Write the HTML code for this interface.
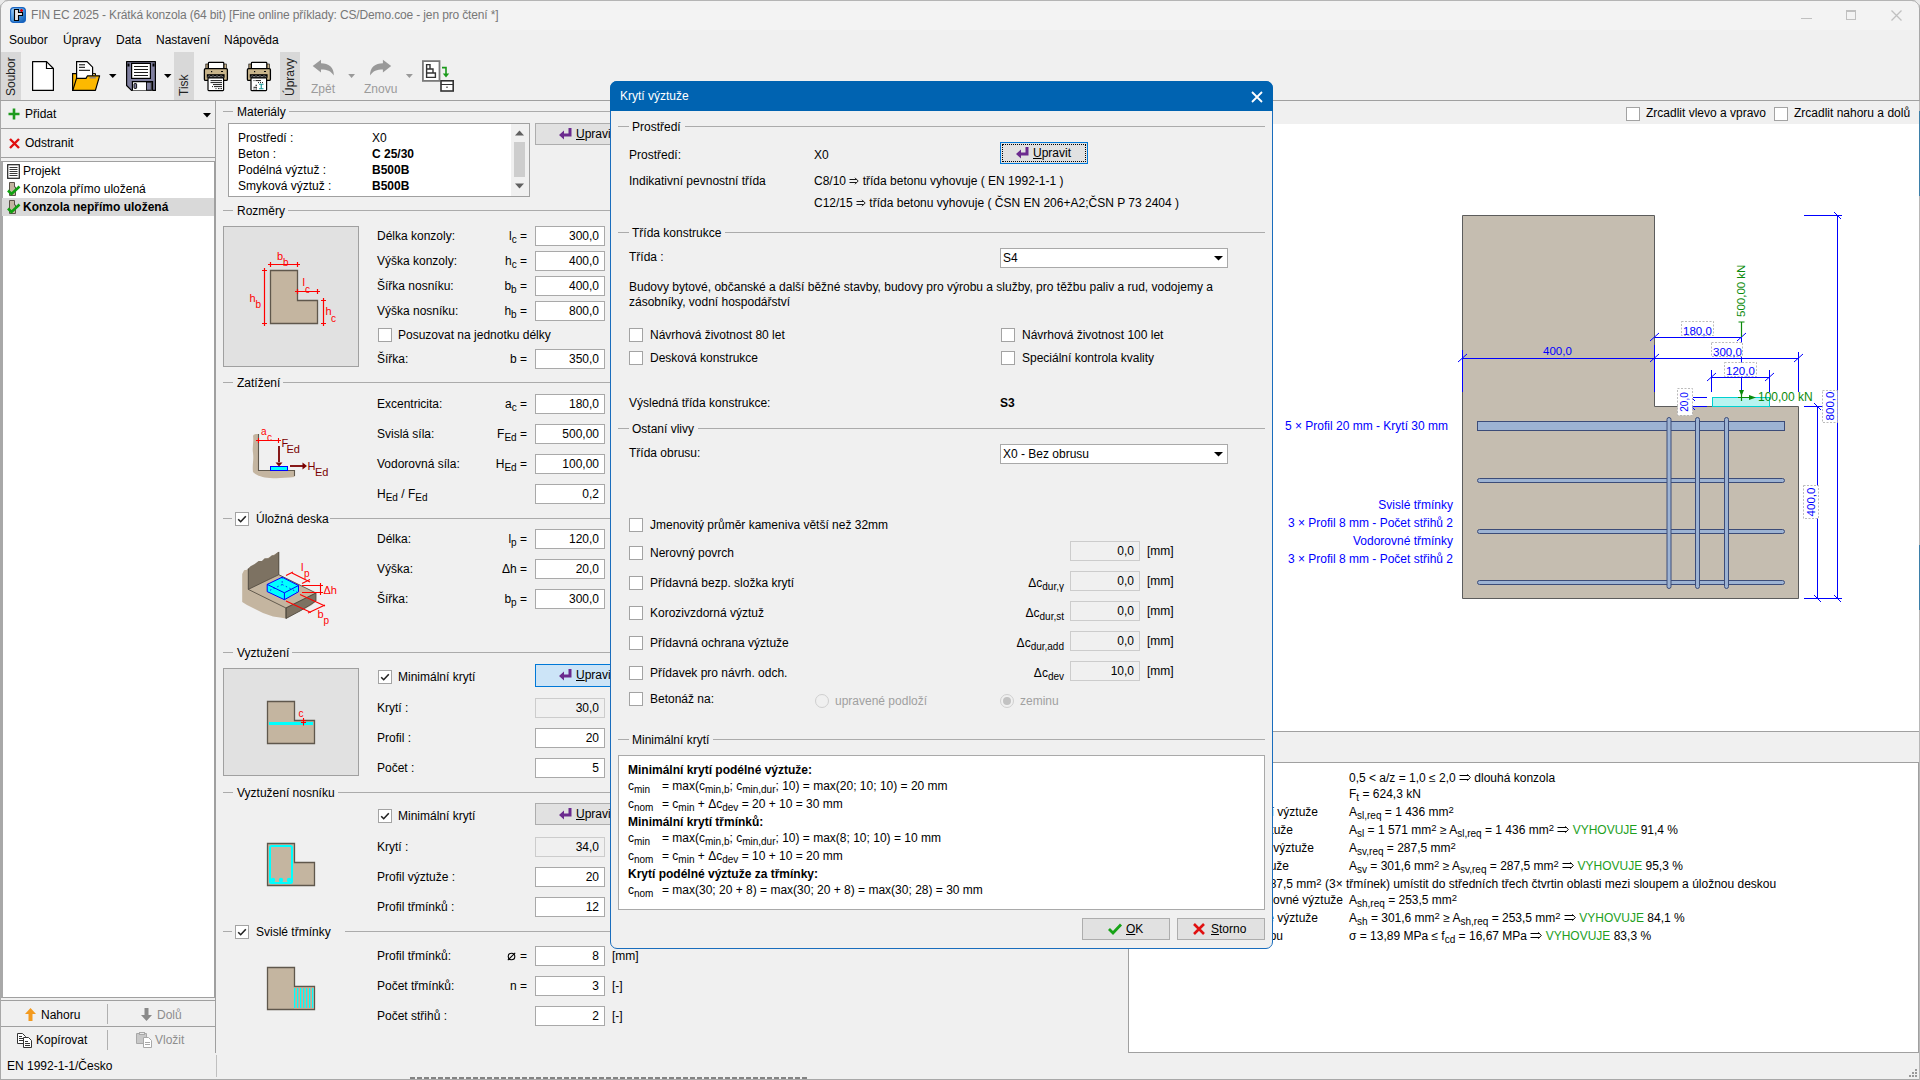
<!DOCTYPE html><html><head><meta charset="utf-8"><style>
*{box-sizing:border-box}
html,body{margin:0;padding:0}
body{width:1920px;height:1080px;overflow:hidden;position:relative;background:#f0f0f0;font-family:"Liberation Sans",sans-serif;font-size:12px;color:#000}
body div{position:absolute}
.t{line-height:16px;white-space:nowrap}
.b{font-weight:bold}
sub{font-size:10px;vertical-align:-2.5px;line-height:0}
sup{font-size:9.5px;vertical-align:3px;line-height:0}
svg{position:absolute;overflow:visible}
</style></head><body>
<div style="left:0px;top:0px;width:1920px;height:30px;background:#f3f3f3"></div>
<div style="left:0px;top:0px;width:1920px;height:1px;background:#b4b4b4"></div>
<div style="left:0px;top:0px;width:1px;height:1080px;background:#a8a8a8"></div>
<div style="left:1919px;top:0px;width:1px;height:1080px;background:#a8a8a8"></div>
<svg style="left:10px;top:7px" width="16" height="16" viewBox="0 0 16 16">
<defs><linearGradient id="ig" x1="0" y1="0" x2="1" y2="1"><stop offset="0" stop-color="#a8d4f8"/><stop offset="0.5" stop-color="#4a9ae0"/><stop offset="1" stop-color="#0a55b0"/></linearGradient></defs>
<rect x="0.6" y="0.6" width="14.8" height="14.8" rx="3.2" fill="url(#ig)" stroke="#1a64c0" stroke-width="1.2"/>
<path d="M4.5 2.5 H8.5 V5.5 H12.5 V8.5 H8.5 V13.5 H4.5 Z" fill="#e8e8e8" stroke="#000" stroke-width="1.1"/>
<path d="M11.5 2 V5 M10 3.5 H13" stroke="#d00" stroke-width="1.3"/></svg>
<svg style="left:0;top:0" width="10" height="10" viewBox="0 0 10 10"><path d="M0 0 H8 A8 8 0 0 0 0 8 Z" fill="#e9e9e9"/><path d="M8.5 0.5 A8 8 0 0 0 0.5 8.5" fill="none" stroke="#b0b0b0" stroke-width="1"/></svg>
<svg style="left:1910px;top:0" width="10" height="10" viewBox="0 0 10 10"><path d="M10 0 H2 A8 8 0 0 1 10 8 Z" fill="#e9e9e9"/><path d="M1.5 0.5 A8 8 0 0 1 9.5 8.5" fill="none" stroke="#b0b0b0" stroke-width="1"/></svg>
<div class="t" style="left:31px;top:6.5px;color:#777;font-size:12px;letter-spacing:-0.14px">FIN EC 2025 - Krátká konzola (64 bit) [Fine online příklady: CS/Demo.coe - jen pro čtení *]</div>
<div style="left:1801px;top:18px;width:11px;height:1px;background:#c0c0c0"></div>
<div style="left:1846px;top:10px;width:10px;height:10px;border:1px solid #c0c0c0;border-top-width:2px"></div>
<svg style="left:1891px;top:10px" width="11" height="11"><path d="M0.5 0.5 L10.5 10.5 M10.5 0.5 L0.5 10.5" stroke="#c0c0c0" stroke-width="1.3"/></svg>
<div class="t" style="left:9px;top:32px;">Soubor</div>
<div class="t" style="left:63px;top:32px;">Úpravy</div>
<div class="t" style="left:116px;top:32px;">Data</div>
<div class="t" style="left:156px;top:32px;">Nastavení</div>
<div class="t" style="left:224px;top:32px;">Nápověda</div>
<div style="left:1px;top:52px;width:20px;height:48px;background:#d8d8d8"></div>
<div class="t" style="left:-13px;top:66px;width:48px;height:20px;line-height:20px;padding-left:4px;transform:rotate(-90deg);color:#222">Soubor</div>
<div style="left:174px;top:52px;width:20px;height:48px;background:#d8d8d8"></div>
<div class="t" style="left:160px;top:66px;width:48px;height:20px;line-height:20px;padding-left:4px;transform:rotate(-90deg);color:#222">Tisk</div>
<div style="left:280px;top:52px;width:20px;height:48px;background:#d8d8d8"></div>
<div class="t" style="left:266px;top:66px;width:48px;height:20px;line-height:20px;padding-left:4px;transform:rotate(-90deg);color:#222">Úpravy</div>
<div style="left:0px;top:100px;width:1920px;height:1px;background:#a0a0a0"></div>
<svg style="left:0;top:0" width="470" height="100" viewBox="0 0 470 100">
<path d="M32.6 61.6 H46.5 L53.4 68.5 V90.4 H32.6 Z" fill="#fff" stroke="#000" stroke-width="1.2" stroke-linejoin="round"/>
<path d="M46.5 61.6 V68.5 H53.4" fill="none" stroke="#000" stroke-width="1.2"/>
<path d="M72.6 90.4 V73.6 H79 V90.4 Z" fill="#fdb900" stroke="#000" stroke-width="1.2"/>
<path d="M76.6 61.6 H87 L92.6 67.2 V79 H76.6 Z" fill="#fff" stroke="#000" stroke-width="1.2"/>
<path d="M79 64.8 H85 M79 67.3 H85 M79 70.3 H90" stroke="#000" stroke-width="1"/>
<path d="M92.6 73.6 H95.5 V75.5" fill="#fdb900" stroke="#000" stroke-width="1"/>
<path d="M72.8 90.4 L76.5 78.4 H86 L87.5 75.8 H99.6 L95.4 90.4 Z" fill="#fdb900" stroke="#000" stroke-width="1.2" stroke-linejoin="round"/>
<path d="M89.5 77.8 H95.8" stroke="#7a7a9a" stroke-width="1.2"/>
<path d="M109 74 H116.5 L112.75 78 Z" fill="#000"/>
<path d="M126.6 61.6 H155.4 V90.4 H131.5 L126.6 85.5 Z" fill="#7f7f9f" stroke="#000" stroke-width="1.2" stroke-linejoin="round"/>
<rect x="131.6" y="63.4" width="18.8" height="15" fill="#fff" stroke="#000" stroke-width="1.2"/>
<path d="M134 66.5 H148 M134 69.5 H148 M134 72.5 H148 M134 75.5 H148" stroke="#000" stroke-width="0.9"/>
<rect x="127.5" y="63.5" width="2" height="3" fill="#000"/><rect x="152.5" y="63.5" width="2" height="3" fill="#000"/>
<path d="M132.4 90.4 V81.6 H152.6 V90.4" fill="#fff" stroke="#000" stroke-width="1.2"/>
<rect x="146.5" y="82.2" width="4.8" height="8" fill="#7f7f9f" stroke="#000" stroke-width="0.9"/>
<rect x="134" y="83.6" width="2.6" height="4.8" rx="0.6" fill="#7f7f9f" stroke="#000" stroke-width="0.9"/>
<path d="M164 74 H171.5 L167.75 78 Z" fill="#000"/>
<g transform="translate(0,0)">
<rect x="205.8" y="64" width="2.6" height="5" fill="#a89370" stroke="#000" stroke-width="0.6"/><rect x="223.8" y="64" width="2.6" height="5" fill="#c8b48a" stroke="#000" stroke-width="0.6"/>
<rect x="208.4" y="62.4" width="15.4" height="6.2" rx="0.8" fill="#fff" stroke="#000" stroke-width="1.2"/>
<rect x="204.4" y="68.6" width="23" height="11.8" rx="1.2" fill="#c8b48a" stroke="#000" stroke-width="1.3"/>
<rect x="206.8" y="74.2" width="17.8" height="3.6" fill="#000"/>
<path d="M207.5 77 C209 75.5 210 75.5 211 77 C212.5 75.5 213.5 75.5 215 77 C216.5 75.5 217.5 75.5 219 77 C220.5 75.5 221.5 75.5 223.5 77" stroke="#999" stroke-width="0.9" fill="none"/>
<rect x="211" y="71" width="1.2" height="1.2" fill="#000"/><rect x="221" y="71" width="2" height="1" fill="#000"/>
<rect x="208" y="77.8" width="15.6" height="12.8" rx="0.8" fill="#fff" stroke="#000" stroke-width="1.2"/>
<path d="M210.5 80.6 H222 M210.5 82.6 H222 M213 84.6 H222 M212 86.6 H213 M214 86.6 H222 M215.5 88.6 H216.5 M218 88.6 H219.5 M220.5 88.6 H222" stroke="#000" stroke-width="0.9"/>
</g><g transform="translate(43,0)">
<rect x="205.8" y="64" width="2.6" height="5" fill="#a89370" stroke="#000" stroke-width="0.6"/><rect x="223.8" y="64" width="2.6" height="5" fill="#c8b48a" stroke="#000" stroke-width="0.6"/>
<rect x="208.4" y="62.4" width="15.4" height="6.2" rx="0.8" fill="#fff" stroke="#000" stroke-width="1.2"/>
<rect x="204.4" y="68.6" width="23" height="11.8" rx="1.2" fill="#c8b48a" stroke="#000" stroke-width="1.3"/>
<rect x="206.8" y="74.2" width="17.8" height="3.6" fill="#000"/>
<path d="M207.5 77 C209 75.5 210 75.5 211 77 C212.5 75.5 213.5 75.5 215 77 C216.5 75.5 217.5 75.5 219 77 C220.5 75.5 221.5 75.5 223.5 77" stroke="#999" stroke-width="0.9" fill="none"/>
<rect x="211" y="71" width="1.2" height="1.2" fill="#000"/><rect x="221" y="71" width="2" height="1" fill="#000"/>
<rect x="208" y="77.8" width="15.6" height="12.8" rx="0.8" fill="#fff" stroke="#000" stroke-width="1.2"/>
<path d="M210.5 80.6 H211.5 M212.5 80.6 H218 M215 82.6 H216 M217 82.6 H218 M219 82.6 H220 M212.5 85.3 H214 M210.5 87.3 H214 M210.5 89 H211.5 M212.5 89 H214" stroke="#000" stroke-width="0.9"/><path d="M216 84.2 H220.5 M218.25 84.2 V88.8 M216 88.8 H220.5" stroke="#1a9a9a" stroke-width="1.1"/>
</g>
<path d="M312.7 66 L321 59.7 V63.3 C328.5 63.3 334.2 67.5 333.8 75.5 C331 71 327 69.5 321 69.5 V72.5 Z" fill="#999"/>
<path d="M348.2 74 H355 L351.6 78 Z" fill="#999"/>
<path d="M391.2 66 L382.9 59.7 V63.3 C375.4 63.3 369.7 67.5 370.1 75.5 C372.9 71 376.9 69.5 382.9 69.5 V72.5 Z" fill="#999"/>
<path d="M405.9 74 H412.9 L409.4 78 Z" fill="#999"/>
<rect x="422.9" y="61.1" width="16.6" height="19.8" fill="#fff" stroke="#7a7a7a" stroke-width="1.8"/>
<path d="M426.6 64.6 H430 V69 H433 V73 H435.4 V77.4 H426.6 Z M426.6 69 H430 M426.6 73 H433" fill="none" stroke="#333" stroke-width="1.4"/>
<path d="M442 67.6 H446 V74" fill="none" stroke="#1a9a1a" stroke-width="1.6"/><path d="M442.8 73.5 H449.2 L446 77.5 Z" fill="#1a9a1a"/>
<rect x="441" y="80.8" width="12.2" height="10.2" fill="#fff" stroke="#333" stroke-width="1.6"/>
<path d="M441 84.5 H453.2 M447 86.5 V88" stroke="#333" stroke-width="1.2"/>
</svg>
<div class="t" style="left:311px;top:81px;color:#9b9b9b">Zpět</div>
<div class="t" style="left:364px;top:81px;color:#9b9b9b">Znovu</div>
<div style="left:215px;top:101px;width:1px;height:952px;background:#a0a0a0"></div>
<div style="left:1px;top:128px;width:214px;height:1px;background:#a0a0a0"></div>
<svg style="left:8px;top:108px" width="12" height="12"><path d="M6 0.5 V11.5 M0.5 6 H11.5" stroke="#1f9a1f" stroke-width="2.6"/></svg>
<div class="t" style="left:25px;top:106px;">Přidat</div>
<svg style="left:203px;top:113px" width="8" height="5"><path d="M0 0 H8 L4 4.5 Z" fill="#000"/></svg>
<div style="left:1px;top:157px;width:214px;height:1px;background:#a0a0a0"></div>
<svg style="left:9px;top:138px" width="11" height="11"><path d="M1 1 L10 10 M10 1 L1 10" stroke="#e01010" stroke-width="2.4"/></svg>
<div class="t" style="left:25px;top:135px;">Odstranit</div>
<div style="left:1px;top:161px;width:214px;height:837px;background:#fff;border:1px solid #a0a0a0;border-left:2px solid #a8a8a8"></div>
<svg style="left:7px;top:164px" width="13" height="15"><rect x="0.7" y="0.7" width="11.6" height="13.6" fill="#fff" stroke="#222" stroke-width="1.2"/><path d="M2.5 3.5 H10.5 M2.5 5.5 H10.5 M2.5 7.5 H10.5 M2.5 9.5 H10.5 M2.5 11.5 H10.5" stroke="#222" stroke-width="0.9"/></svg>
<div class="t" style="left:23px;top:163px;">Projekt</div>
<div style="left:2px;top:198px;width:212px;height:18px;background:#d9d9d9"></div>
<svg style="left:7px;top:182px" width="14" height="15"><path d="M2.5 0.5 H7.5 V5 H8.5 V13.5 H2.5 Z" fill="#c4b5a0" stroke="#5a5248" stroke-width="1"/><path d="M1 8.5 L4.5 12 L12.5 4.5" fill="none" stroke="#10a010" stroke-width="2.6"/></svg>
<svg style="left:7px;top:200px" width="14" height="15"><path d="M2.5 0.5 H7.5 V5 H8.5 V13.5 H2.5 Z" fill="#c4b5a0" stroke="#5a5248" stroke-width="1"/><path d="M1 8.5 L4.5 12 L12.5 4.5" fill="none" stroke="#10a010" stroke-width="2.6"/></svg>
<div class="t" style="left:23px;top:181px;">Konzola přímo uložená</div>
<div class="t" style="left:23px;top:199px;font-weight:bold">Konzola nepřímo uložená</div>
<div style="left:1px;top:1000px;width:214px;height:1px;background:#a0a0a0"></div>
<div style="left:1px;top:1026px;width:214px;height:1px;background:#a0a0a0"></div>
<div style="left:107px;top:1004px;width:1px;height:20px;background:#b0b0b0"></div>
<div style="left:107px;top:1030px;width:1px;height:20px;background:#b0b0b0"></div>
<svg style="left:25px;top:1008px" width="11" height="13"><path d="M5.5 0 L11 6 H7.5 V13 H3.5 V6 H0 Z" fill="#f39a1f"/></svg>
<div class="t" style="left:41px;top:1007px;">Nahoru</div>
<svg style="left:141px;top:1008px" width="11" height="13"><path d="M5.5 13 L11 7 H7.5 V0 H3.5 V7 H0 Z" fill="#8a8a8a"/></svg>
<div class="t" style="left:157px;top:1007px;color:#8d8d8d">Dolů</div>
<svg style="left:17px;top:1033px" width="16" height="15" viewBox="0 0 16 15"><path d="M0.5 0.5 H5.5 L8.5 3.5 V10.5 H0.5 Z" fill="#fff" stroke="#333" stroke-width="1"/><path d="M2 3.5 H5 M2 5.5 H6 M2 7.5 H6" stroke="#333" stroke-width="1"/><path d="M6.5 4.5 H11.5 L14.5 7.5 V14.5 H6.5 Z" fill="#fff" stroke="#333" stroke-width="1"/><path d="M8 8.5 H11 M8 10.5 H13 M8 12.5 H13" stroke="#333" stroke-width="1"/></svg>
<div class="t" style="left:36px;top:1032px;">Kopírovat</div>
<svg style="left:136px;top:1032px" width="17" height="17" viewBox="0 0 17 17"><path d="M0.5 1.5 H10.5 V11.5 H0.5 Z" fill="#c8c8c8" stroke="#a8a8a8" stroke-width="1"/><rect x="3.5" y="0.5" width="5" height="2" fill="#e8e8e8" stroke="#a8a8a8" stroke-width="1"/><path d="M7.5 5.5 H12.5 L15.5 8.5 V15.5 H7.5 Z" fill="#fff" stroke="#a8a8a8" stroke-width="1"/><path d="M9 10.5 H14 M9 12.5 H14" stroke="#a8a8a8" stroke-width="1"/></svg>
<div class="t" style="left:155px;top:1032px;color:#8d8d8d">Vložit</div>
<div style="left:216px;top:1055px;width:1px;height:22px;background:#c0c0c0"></div>
<div class="t" style="left:7px;top:1058px;">EN 1992-1-1/Česko</div>
<div style="left:0px;top:1079px;width:1920px;height:1px;background:#a8a8a8"></div>
<div style="left:223px;top:111px;width:10px;height:1px;background:#ababab"></div>
<div class="t" style="left:237px;top:104px;">Materiály</div>
<div style="left:289px;top:111px;width:839px;height:1px;background:#ababab"></div>
<div style="left:228px;top:123px;width:302px;height:74px;background:#fff;border:1px solid #a0a0a0"></div>
<div class="t" style="left:238px;top:129.5px;">Prostředí :</div>
<div class="t" style="left:372px;top:129.5px;">X0</div>
<div class="t" style="left:238px;top:145.5px;">Beton :</div>
<div class="t" style="left:372px;top:145.5px;font-weight:bold">C 25/30</div>
<div class="t" style="left:238px;top:161.5px;">Podélná výztuž :</div>
<div class="t" style="left:372px;top:161.5px;font-weight:bold">B500B</div>
<div class="t" style="left:238px;top:177.5px;">Smyková výztuž :</div>
<div class="t" style="left:372px;top:177.5px;font-weight:bold">B500B</div>
<div style="left:511px;top:124px;width:18px;height:72px;background:#f0f0f0"></div>
<svg style="left:515px;top:130px" width="10" height="6"><path d="M0 5.5 H9 L4.5 0.5 Z" fill="#606060"/></svg>
<svg style="left:515px;top:183px" width="10" height="6"><path d="M0 0.5 H9 L4.5 5.5 Z" fill="#606060"/></svg>
<div style="left:514px;top:142px;width:11px;height:35px;background:#cdcdcd"></div>
<div style="left:535px;top:123px;width:120px;height:22px;background:#e1e1e1;border:1px solid #adadad"></div>
<svg style="left:559px;top:128px" width="13" height="12" viewBox="0 0 13 12"><path d="M9.5 0 H12.5 V8.5 H5 V11.5 L0 7 L5 2.5 V5.5 H9.5 Z" fill="#6b2a8e"/></svg>
<div class="t" style="left:576px;top:126px;"><u>U</u>pravit</div>
<div style="left:223px;top:210px;width:10px;height:1px;background:#ababab"></div>
<div class="t" style="left:237px;top:203px;">Rozměry</div>
<div style="left:288px;top:210px;width:840px;height:1px;background:#ababab"></div>
<div style="left:223px;top:226px;width:136px;height:141px;background:#e1e1e1;border:1px solid #a0a0a0"></div>
<svg style="left:240px;top:240px" width="110" height="100" viewBox="240 240 110 100">
<path d="M270.5 270.5 H297.5 V300.5 H317.5 V323.5 H270.5 Z" fill="#c4b5a0" stroke="#5f574c" stroke-width="1.3"/>
<g stroke="#ff0000" stroke-width="1.2" fill="none">
<path d="M268 264.5 H300 M270.5 262 V267 M297.5 262 V267"/>
<path d="M264.5 268 V326 M262 270.5 H267 M262 323.5 H267"/>
<path d="M295 291.5 H320 M297.5 289 V294 M317.5 289 V294"/>
<path d="M323.5 298 V326 M321 300.5 H326 M321 323.5 H326"/>
</g>
<g fill="#ff0000" font-family="Liberation Sans" font-size="11">
<text x="277" y="260">b</text><text x="283" y="266" font-size="10">b</text>
<text x="249.5" y="302">h</text><text x="255.5" y="308" font-size="10">b</text>
<text x="302.5" y="286">l</text><text x="305" y="293" font-size="10">c</text>
<text x="325.5" y="315">h</text><text x="331" y="322" font-size="10">c</text>
</g></svg>
<div class="t" style="left:377px;top:228px;">Délka konzoly:</div>
<div class="t" style="right:1393px;top:228px;">l<sub>c</sub> =</div>
<div style="left:535px;top:226px;width:70px;height:20px;background:#fff;border:1px solid #a9a9a9"></div>
<div class="t" style="right:1321px;top:228.0px;">300,0</div>
<div class="t" style="left:377px;top:253px;">Výška konzoly:</div>
<div class="t" style="right:1393px;top:253px;">h<sub>c</sub> =</div>
<div style="left:535px;top:251px;width:70px;height:20px;background:#fff;border:1px solid #a9a9a9"></div>
<div class="t" style="right:1321px;top:253.0px;">400,0</div>
<div class="t" style="left:377px;top:278px;">Šířka nosníku:</div>
<div class="t" style="right:1393px;top:278px;">b<sub>b</sub> =</div>
<div style="left:535px;top:276px;width:70px;height:20px;background:#fff;border:1px solid #a9a9a9"></div>
<div class="t" style="right:1321px;top:278.0px;">400,0</div>
<div class="t" style="left:377px;top:303px;">Výška nosníku:</div>
<div class="t" style="right:1393px;top:303px;">h<sub>b</sub> =</div>
<div style="left:535px;top:301px;width:70px;height:20px;background:#fff;border:1px solid #a9a9a9"></div>
<div class="t" style="right:1321px;top:303.0px;">800,0</div>
<div style="left:378px;top:328px;width:14px;height:14px;background:#fff;border:1px solid #a3a3a3"></div>
<div class="t" style="left:398px;top:327px;">Posuzovat na jednotku délky</div>
<div class="t" style="left:377px;top:351px;">Šířka:</div>
<div class="t" style="right:1393px;top:351px;">b =</div>
<div style="left:535px;top:349px;width:70px;height:20px;background:#fff;border:1px solid #a9a9a9"></div>
<div class="t" style="right:1321px;top:351.0px;">350,0</div>
<div style="left:223px;top:382px;width:10px;height:1px;background:#ababab"></div>
<div class="t" style="left:237px;top:375px;">Zatížení</div>
<div style="left:283px;top:382px;width:845px;height:1px;background:#ababab"></div>
<svg style="left:240px;top:420px" width="100" height="70" viewBox="0 0 100 70">
<path d="M13 16 C14 14 16 14 18.5 14 V50.5 H54.5 V57 C45 58 38 58.5 30 58 C22 57.5 16 55 13 52 C12 45 14 40 13 33 C12 27 14 22 13 16 Z" fill="#c4b5a0"/>
<path d="M18.5 14 V50.5 H54.5 V56" fill="none" stroke="#5f574c" stroke-width="1.1"/>
<g stroke="#ff0000" stroke-width="1.1"><path d="M16 20.5 H41 M18.5 18 V23 M38.5 18 V23"/></g>
<rect x="30.5" y="46.5" width="17" height="4" fill="#00ffff" stroke="#0000ff" stroke-width="1"/>
<path d="M39 26 V42" stroke="#7a0000" stroke-width="1.8"/><path d="M35.5 42.5 H42.5 L39 46.5 Z" fill="#7a0000"/>
<path d="M50 46 H63" stroke="#7a0000" stroke-width="1.8"/><path d="M62.5 42.5 V49.5 L67 46 Z" fill="#7a0000"/>
<g font-family="Liberation Sans"><text x="21" y="15" font-size="10" fill="#ff0000">a</text><text x="27" y="20.5" font-size="10" fill="#ff0000">c</text>
<text x="41.5" y="27" font-size="11" fill="#7a0000">F</text><text x="46.5" y="33" font-size="11" fill="#7a0000">Ed</text>
<text x="67.5" y="50" font-size="11" fill="#7a0000">H</text><text x="75" y="56" font-size="11" fill="#7a0000">Ed</text></g>
</svg>
<div class="t" style="left:377px;top:396px;">Excentricita:</div>
<div class="t" style="right:1393px;top:396px;">a<sub>c</sub> =</div>
<div style="left:535px;top:394px;width:70px;height:20px;background:#fff;border:1px solid #a9a9a9"></div>
<div class="t" style="right:1321px;top:396.0px;">180,0</div>
<div class="t" style="left:377px;top:426px;">Svislá síla:</div>
<div class="t" style="right:1393px;top:426px;">F<sub>Ed</sub> =</div>
<div style="left:535px;top:424px;width:70px;height:20px;background:#fff;border:1px solid #a9a9a9"></div>
<div class="t" style="right:1321px;top:426.0px;">500,00</div>
<div class="t" style="left:377px;top:456px;">Vodorovná síla:</div>
<div class="t" style="right:1393px;top:456px;">H<sub>Ed</sub> =</div>
<div style="left:535px;top:454px;width:70px;height:20px;background:#fff;border:1px solid #a9a9a9"></div>
<div class="t" style="right:1321px;top:456.0px;">100,00</div>
<div class="t" style="left:377px;top:486px;">H<sub>Ed</sub> / F<sub>Ed</sub></div>
<div style="left:535px;top:484px;width:70px;height:20px;background:#fff;border:1px solid #a9a9a9"></div>
<div class="t" style="right:1321px;top:486.0px;">0,2</div>
<div style="left:223px;top:518px;width:9px;height:1px;background:#ababab"></div>
<div style="left:235px;top:512px;width:14px;height:14px;background:#fff;border:1px solid #a3a3a3"></div>
<svg style="left:235px;top:512px" width="14" height="14"><path d="M3.2 7.2 L5.7 9.7 L10.8 4.2" fill="none" stroke="#222" stroke-width="1.6"/></svg>
<div class="t" style="left:256px;top:511px;">Úložná deska</div>
<div style="left:330px;top:518px;width:798px;height:1px;background:#ababab"></div>
<svg style="left:235px;top:545px" width="110" height="85" viewBox="0 0 110 85">
<path d="M7.2 29.1 L9.1 25.2 L11.9 24.7 L13.3 23.6 L43.8 7 V29.5 L81 48 V56 L77 60 L70 64 L63 67 L51 73.5 L45 72.5 L38 71.5 L28 68 L20 64 L12 60 L7.2 56.9 Z" fill="#c4b5a0"/>
<path d="M13.3 44.4 V23.6 L15.5 21.3 L19.7 19.1 L23.6 16.1 L26.9 16.1 L29.7 13.3 L33.6 13.3 L36.9 10.2 L39.1 10.2 L43 6.9 L43.8 6.9 V29.7 Z" fill="#7d7262"/>
<path d="M13.3 44.4 V23.6 M43.8 6.9 V29.7" stroke="#4a443a" stroke-width="0.9"/>
<path d="M13.3 44.4 L43.8 29.7 L81 48 L51 63 Z" fill="#c4b5a0" stroke="#4a443a" stroke-width="0.8"/>
<path d="M51 63 L81 48 V56 L75 60 L65 66 L51 73.5 Z" fill="#7d7262" stroke="#4a443a" stroke-width="0.8"/>
<path d="M51 63 V73.5" stroke="#4a443a" stroke-width="0.8"/>
<path d="M32.2 39.4 L47.2 32.2 L63.5 40.5 L63.5 46.8 L49.4 54.7 L32.2 46.6 Z" fill="#00ffff"/>
<path d="M47.2 32.2 V39.5 M47.2 39.5 L33.5 46 M47.2 39.5 L62 47" stroke="#0000ff" stroke-width="0.8" stroke-dasharray="1.5 2.5" fill="none"/>
<path d="M32.2 39.4 L47.2 32.2 L63.5 40.5 L49.4 47.8 Z M32.2 39.4 V46.6 L49.4 54.7 L63.5 46.8 V40.5 M49.4 47.8 V54.7" fill="none" stroke="#0000ff" stroke-width="1"/>
<g stroke="#ff0000" stroke-width="1.1" fill="none">
<path d="M51 30.5 L58 27 M57 28 L75 37 M67 38.5 L75 34.5"/>
<path d="M67 40.5 H88 M67 47.5 H88 M85.5 38 V50"/>
<path d="M65 49.5 L90 61 M51 56 L76 67.5 M73 68 L90 60"/>
</g>
<g font-family="Liberation Sans" fill="#ff0000"><text x="66" y="26" font-size="11">l</text><text x="69" y="32" font-size="10">p</text>
<text x="88.5" y="49" font-size="11">Δh</text>
<text x="82.5" y="73" font-size="11">b</text><text x="88.5" y="79" font-size="10">p</text></g>
</svg>
<div class="t" style="left:377px;top:531px;">Délka:</div>
<div class="t" style="right:1393px;top:531px;">l<sub>p</sub> =</div>
<div style="left:535px;top:529px;width:70px;height:20px;background:#fff;border:1px solid #a9a9a9"></div>
<div class="t" style="right:1321px;top:531.0px;">120,0</div>
<div class="t" style="left:377px;top:561px;">Výška:</div>
<div class="t" style="right:1393px;top:561px;">Δh =</div>
<div style="left:535px;top:559px;width:70px;height:20px;background:#fff;border:1px solid #a9a9a9"></div>
<div class="t" style="right:1321px;top:561.0px;">20,0</div>
<div class="t" style="left:377px;top:591px;">Šířka:</div>
<div class="t" style="right:1393px;top:591px;">b<sub>p</sub> =</div>
<div style="left:535px;top:589px;width:70px;height:20px;background:#fff;border:1px solid #a9a9a9"></div>
<div class="t" style="right:1321px;top:591.0px;">300,0</div>
<div style="left:223px;top:652px;width:10px;height:1px;background:#ababab"></div>
<div class="t" style="left:237px;top:645px;">Vyztužení</div>
<div style="left:292px;top:652px;width:836px;height:1px;background:#ababab"></div>
<div style="left:223px;top:668px;width:136px;height:108px;background:#e1e1e1;border:1px solid #a0a0a0"></div>
<svg style="left:255px;top:690px" width="75" height="60" viewBox="255 690 75 60">
<path d="M267.5 701.5 H294.5 V720.5 H314.5 V743.5 H267.5 Z" fill="#c4b5a0" stroke="#5f574c" stroke-width="1.3"/>
<rect x="269" y="722" width="44" height="3" fill="#00ffff"/>
<path d="M303.5 718 V725.5 M301 720.5 H306 M301 722.5 H306" stroke="#ff0000" stroke-width="1.1"/>
<text x="298.5" y="717" font-family="Liberation Sans" font-size="10" fill="#ff0000">c</text>
</svg>
<div style="left:378px;top:670px;width:14px;height:14px;background:#fff;border:1px solid #a3a3a3"></div>
<svg style="left:378px;top:670px" width="14" height="14"><path d="M3.2 7.2 L5.7 9.7 L10.8 4.2" fill="none" stroke="#222" stroke-width="1.6"/></svg>
<div class="t" style="left:398px;top:669px;">Minimální krytí</div>
<div style="left:535px;top:664px;width:120px;height:23px;background:#cce4f7;border:1px solid #0078d7"></div>
<svg style="left:559px;top:669px" width="13" height="12" viewBox="0 0 13 12"><path d="M9.5 0 H12.5 V8.5 H5 V11.5 L0 7 L5 2.5 V5.5 H9.5 Z" fill="#6b2a8e"/></svg>
<div class="t" style="left:576px;top:667px;"><u>U</u>pravit</div>
<div class="t" style="left:377px;top:700px;">Krytí :</div>
<div style="left:535px;top:698px;width:70px;height:20px;background:#f0f0f0;border:1px solid #cccccc"></div>
<div class="t" style="right:1321px;top:700.0px;">30,0</div>
<div class="t" style="left:377px;top:730px;">Profil :</div>
<div style="left:535px;top:728px;width:70px;height:20px;background:#fff;border:1px solid #a9a9a9"></div>
<div class="t" style="right:1321px;top:730.0px;">20</div>
<div class="t" style="left:377px;top:760px;">Počet :</div>
<div style="left:535px;top:758px;width:70px;height:20px;background:#fff;border:1px solid #a9a9a9"></div>
<div class="t" style="right:1321px;top:760.0px;">5</div>
<div style="left:223px;top:792px;width:10px;height:1px;background:#ababab"></div>
<div class="t" style="left:237px;top:785px;">Vyztužení nosníku</div>
<div style="left:338px;top:792px;width:790px;height:1px;background:#ababab"></div>
<svg style="left:255px;top:835px" width="75" height="60" viewBox="255 835 75 60">
<path d="M267.5 843.5 H294.5 V862.5 H314.5 V885.5 H267.5 Z" fill="#c4b5a0" stroke="#5f574c" stroke-width="1.3"/>
<rect x="270" y="846" width="22" height="37" rx="1.5" fill="none" stroke="#00ffff" stroke-width="2"/>
<circle cx="273" cy="880" r="2.2" fill="#00ffff"/><circle cx="281" cy="880" r="2.2" fill="#00ffff"/><circle cx="289" cy="880" r="2.2" fill="#00ffff"/>
</svg>
<div style="left:378px;top:809px;width:14px;height:14px;background:#fff;border:1px solid #a3a3a3"></div>
<svg style="left:378px;top:809px" width="14" height="14"><path d="M3.2 7.2 L5.7 9.7 L10.8 4.2" fill="none" stroke="#222" stroke-width="1.6"/></svg>
<div class="t" style="left:398px;top:808px;">Minimální krytí</div>
<div style="left:535px;top:803px;width:120px;height:22px;background:#e1e1e1;border:1px solid #adadad"></div>
<svg style="left:559px;top:808px" width="13" height="12" viewBox="0 0 13 12"><path d="M9.5 0 H12.5 V8.5 H5 V11.5 L0 7 L5 2.5 V5.5 H9.5 Z" fill="#6b2a8e"/></svg>
<div class="t" style="left:576px;top:806px;"><u>U</u>pravit</div>
<div class="t" style="left:377px;top:839px;">Krytí :</div>
<div style="left:535px;top:837px;width:70px;height:20px;background:#f0f0f0;border:1px solid #cccccc"></div>
<div class="t" style="right:1321px;top:839.0px;">34,0</div>
<div class="t" style="left:377px;top:869px;">Profil výztuže :</div>
<div style="left:535px;top:867px;width:70px;height:20px;background:#fff;border:1px solid #a9a9a9"></div>
<div class="t" style="right:1321px;top:869.0px;">20</div>
<div class="t" style="left:377px;top:899px;">Profil třmínků :</div>
<div style="left:535px;top:897px;width:70px;height:20px;background:#fff;border:1px solid #a9a9a9"></div>
<div class="t" style="right:1321px;top:899.0px;">12</div>
<div style="left:223px;top:931px;width:9px;height:1px;background:#ababab"></div>
<div style="left:235px;top:925px;width:14px;height:14px;background:#fff;border:1px solid #a3a3a3"></div>
<svg style="left:235px;top:925px" width="14" height="14"><path d="M3.2 7.2 L5.7 9.7 L10.8 4.2" fill="none" stroke="#222" stroke-width="1.6"/></svg>
<div class="t" style="left:256px;top:924px;">Svislé třmínky</div>
<div style="left:345px;top:931px;width:783px;height:1px;background:#ababab"></div>
<svg style="left:255px;top:960px" width="75" height="60" viewBox="255 960 75 60">
<path d="M267.5 967.5 H294.5 V986.5 H314.5 V1009.5 H267.5 Z" fill="#c4b5a0" stroke="#5f574c" stroke-width="1.3"/>
<rect x="294" y="987.5" width="20" height="21" fill="#d0a890"/><rect x="294" y="988" width="1.3" height="20" fill="#00ffff"/><rect x="297" y="988" width="1.3" height="20" fill="#00ffff"/><rect x="300" y="988" width="1.3" height="20" fill="#00ffff"/><rect x="303" y="988" width="1.3" height="20" fill="#00ffff"/><rect x="306" y="988" width="1.3" height="20" fill="#00ffff"/><rect x="309" y="988" width="1.3" height="20" fill="#00ffff"/><rect x="312" y="988" width="1.3" height="20" fill="#00ffff"/>
</svg>
<div class="t" style="left:377px;top:948px;">Profil třmínků:</div>
<div class="t" style="right:1393px;top:948px;"><svg style="position:static;display:inline-block;vertical-align:-1px;margin-right:4px" width="9" height="9" viewBox="0 0 9 9"><circle cx="4.5" cy="4.5" r="3.3" fill="none" stroke="#000" stroke-width="1.1"/><path d="M0.8 8.2 L8.2 0.8" stroke="#000" stroke-width="1.1"/></svg>=</div>
<div style="left:535px;top:946px;width:70px;height:20px;background:#fff;border:1px solid #a9a9a9"></div>
<div class="t" style="right:1321px;top:948.0px;">8</div>
<div class="t" style="left:612px;top:948px;">[mm]</div>
<div class="t" style="left:377px;top:978px;">Počet třmínků:</div>
<div class="t" style="right:1393px;top:978px;">n =</div>
<div style="left:535px;top:976px;width:70px;height:20px;background:#fff;border:1px solid #a9a9a9"></div>
<div class="t" style="right:1321px;top:978.0px;">3</div>
<div class="t" style="left:612px;top:978px;">[-]</div>
<div class="t" style="left:377px;top:1008px;">Počet střihů :</div>
<div style="left:535px;top:1006px;width:70px;height:20px;background:#fff;border:1px solid #a9a9a9"></div>
<div class="t" style="right:1321px;top:1008.0px;">2</div>
<div class="t" style="left:612px;top:1008px;">[-]</div>
<div style="left:410px;top:1077px;width:398px;height:2px;background:repeating-linear-gradient(90deg,#555 0 5px,transparent 5px 7px);opacity:0.7"></div>
<div style="left:1626px;top:107px;width:14px;height:14px;background:#fff;border:1px solid #a3a3a3"></div>
<div class="t" style="left:1646px;top:105px;">Zrcadlit vlevo a vpravo</div>
<div style="left:1774px;top:107px;width:14px;height:14px;background:#fff;border:1px solid #a3a3a3"></div>
<div class="t" style="left:1794px;top:105px;">Zrcadlit nahoru a dolů</div>
<div style="left:1128px;top:124px;width:791px;height:607px;background:#fff"></div>
<div style="left:1128px;top:731px;width:791px;height:1px;background:#a0a0a0"></div>
<div style="left:1128px;top:762px;width:791px;height:1px;background:#a0a0a0"></div>
<div style="left:1919px;top:101px;width:1px;height:979px;background:#b8b8b8"></div>
<div style="left:1918.5px;top:111px;width:1.5px;height:85px;background:#3d7fa8"></div>
<div style="left:1918.5px;top:545px;width:1.5px;height:65px;background:#3d7fa8"></div>
<div style="left:1915px;top:1069px;width:2px;height:2px;background:#999"></div>
<div style="left:1912px;top:1072px;width:2px;height:2px;background:#999"></div>
<div style="left:1915px;top:1072px;width:2px;height:2px;background:#999"></div>
<div style="left:1909px;top:1075px;width:2px;height:2px;background:#999"></div>
<div style="left:1912px;top:1075px;width:2px;height:2px;background:#999"></div>
<div style="left:1915px;top:1075px;width:2px;height:2px;background:#999"></div>
<div style="left:1128px;top:763px;width:791px;height:290px;background:#fff;border:1px solid #a0a0a0;border-top:none"></div>
<svg style="left:0;top:0" width="1920" height="1080" viewBox="0 0 1920 1080">
<path d="M1462.5 215.5 H1654.5 V406.5 H1798.5 V598.5 H1462.5 Z" fill="#c5bdb0" stroke="#5c5c5c" stroke-width="1"/>
<g fill="#9db3d3" stroke="#3c4c78" stroke-width="1">
<rect x="1477.5" y="421.5" width="307" height="9"/>
<rect x="1477.5" y="478.5" width="307" height="4" rx="2"/>
<rect x="1477.5" y="529.5" width="307" height="4" rx="2"/>
<rect x="1477.5" y="580.5" width="307" height="4" rx="2"/>
<rect x="1667" y="417.5" width="4" height="171" rx="2"/>
<rect x="1695.5" y="417.5" width="4" height="171" rx="2"/>
<rect x="1724.5" y="417.5" width="4" height="171" rx="2"/>
</g>
<rect x="1712.5" y="397.5" width="57" height="9" fill="#b8f4f0" stroke="#00d0d0" stroke-width="1"/>
<g stroke="#0000ff" stroke-width="1" fill="none">
<path d="M1462.5 358.5 H1654.5 M1462.5 350 V392 M1654.5 345 V392 M1654.5 358.5 H1798.5 M1798.5 352 V392"/>
<path d="M1458 362 L1467 354 M1650 362 L1659 354 M1794 362 L1803 354"/>
<path d="M1654.5 337.5 H1741.5 M1650 341 L1659 333 M1737 341 L1746 333"/>
<path d="M1711.5 377.5 H1769.5 M1711.5 370 V392 M1769.5 370 V392 M1707 381 L1716 373 M1765 381 L1774 373"/>
<path d="M1837.5 215.5 V598.5 M1804 215.5 H1842 M1804 598.5 H1842 M1834 212 L1841 219 M1834 595 L1841 602"/>
<path d="M1817.5 406.5 V598.5 M1804 406.5 H1823 M1814 403 L1821 410 M1814 595 L1821 602"/>
<path d="M1693 397.5 H1707 M1693 406.5 H1707 M1688 394 L1695 401 M1688 403 L1695 410"/>
<path d="M1741.5 337.5 V391"/>
</g>
<g stroke="#aaaaaa" stroke-width="0.8" stroke-dasharray="2 1.5" fill="#fff">
<rect x="1681.5" y="321.5" width="32" height="14"/>
<rect x="1711.5" y="342.5" width="31" height="14"/>
<rect x="1724.5" y="362.5" width="32" height="14"/>
<rect x="1677.5" y="388.5" width="15" height="27"/>
<rect x="1822.5" y="390.5" width="15" height="32"/>
<rect x="1803.5" y="485.5" width="15" height="33"/>
</g>
<g stroke="#0a8a0a" stroke-width="1.2" fill="none"><path d="M1741.5 322 V337 M1738.5 322 H1744.5 M1742 397.5 H1752 M1741.5 391 V401 M1738 397.5 H1745"/></g>
<path d="M1739 390 L1741.5 396 L1744 390 Z" fill="#0a8a0a"/><path d="M1749 395 L1756 397.5 L1749 400 Z" fill="#0a8a0a"/>
</svg>
<div class="t" style="left:1543px;top:343px;color:#0000ff;font-size:11.5px">400,0</div>
<div class="t" style="left:1683px;top:323px;color:#0000ff;font-size:11.5px">180,0</div>
<div class="t" style="left:1713px;top:344px;color:#0000ff;font-size:11.5px">300,0</div>
<div class="t" style="left:1726px;top:363px;color:#0000ff;font-size:11.5px">120,0</div>
<div class="t" style="left:1758px;top:389px;color:#0a8a0a;font-size:12px">100,00 kN</div>
<div class="t" style="left:1717px;top:285px;width:48px;height:16px;text-align:center;transform:rotate(-90deg);color:#0a8a0a;font-size:11.5px">500,00 kN</div>
<div class="t" style="left:1810px;top:398px;width:40px;height:16px;text-align:center;transform:rotate(-90deg);color:#0000ff;font-size:11.5px">800,0</div>
<div class="t" style="left:1791px;top:494px;width:40px;height:16px;text-align:center;transform:rotate(-90deg);color:#0000ff;font-size:11.5px">400,0</div>
<div class="t" style="left:1670px;top:394px;width:30px;height:16px;text-align:center;transform:rotate(-90deg);color:#0000ff;font-size:10px">20,0</div>
<div class="t" style="right:472px;top:418px;color:#0000ff">5 × Profil 20 mm - Krytí 30 mm</div>
<div class="t" style="right:467px;top:497px;color:#0000ff">Svislé třmínky</div>
<div class="t" style="right:467px;top:515px;color:#0000ff">3 × Profil 8 mm - Počet střihů 2</div>
<div class="t" style="right:467px;top:533px;color:#0000ff">Vodorovné třmínky</div>
<div class="t" style="right:467px;top:551px;color:#0000ff">3 × Profil 8 mm - Počet střihů 2</div>
<div class="t" style="right:660px;top:770px;">Typ konzoly</div>
<div class="t" style="left:1349px;top:770px;">0,5 &lt; a/z = 1,0 ≤ 2,0 <svg style="position:static;display:inline-block;vertical-align:1px" width="12" height="7" viewBox="0 0 12 7"><path d="M0.5 1.5 H9.3 M0.5 5.5 H9.3 M8.3 0.3 L11.3 3.5 L8.3 6.7" fill="none" stroke="#000" stroke-width="1.0"/></svg> dlouhá konzola</div>
<div class="t" style="right:660px;top:786px;">Síla v táhle</div>
<div class="t" style="left:1349px;top:786px;">F<sub>t</sub> = 624,3 kN</div>
<div class="t" style="right:602px;top:804px;">Potřebná plocha hlavní výztuže</div>
<div class="t" style="left:1349px;top:804px;">A<sub>sl,req</sub> = 1 436 mm<sup>2</sup></div>
<div class="t" style="right:627px;top:822px;">Plocha hlavní výztuže</div>
<div class="t" style="left:1349px;top:822px;">A<sub>sl</sub> = 1 571 mm<sup>2</sup> ≥ A<sub>sl,req</sub> = 1 436 mm<sup>2</sup> <svg style="position:static;display:inline-block;vertical-align:1px" width="12" height="7" viewBox="0 0 12 7"><path d="M0.5 1.5 H9.3 M0.5 5.5 H9.3 M8.3 0.3 L11.3 3.5 L8.3 6.7" fill="none" stroke="#000" stroke-width="1.0"/></svg> <span style="color:#1ea01e">VYHOVUJE</span> 91,4 %</div>
<div class="t" style="right:606px;top:840px;">Potřebná plocha svislé výztuže</div>
<div class="t" style="left:1349px;top:840px;">A<sub>sv,req</sub> = 287,5 mm<sup>2</sup></div>
<div class="t" style="right:631px;top:858px;">Plocha svislé výztuže</div>
<div class="t" style="left:1349px;top:858px;">A<sub>sv</sub> = 301,6 mm<sup>2</sup> ≥ A<sub>sv,req</sub> = 287,5 mm<sup>2</sup> <svg style="position:static;display:inline-block;vertical-align:1px" width="12" height="7" viewBox="0 0 12 7"><path d="M0.5 1.5 H9.3 M0.5 5.5 H9.3 M8.3 0.3 L11.3 3.5 L8.3 6.7" fill="none" stroke="#000" stroke-width="1.0"/></svg> <span style="color:#1ea01e">VYHOVUJE</span> 95,3 %</div>
<div class="t" style="right:577px;top:892px;">Potřebná plocha vodorovné výztuže</div>
<div class="t" style="left:1349px;top:892px;">A<sub>sh,req</sub> = 253,5 mm<sup>2</sup></div>
<div class="t" style="right:602px;top:910px;">Plocha vodorovné výztuže</div>
<div class="t" style="left:1349px;top:910px;">A<sub>sh</sub> = 301,6 mm<sup>2</sup> ≥ A<sub>sh,req</sub> = 253,5 mm<sup>2</sup> <svg style="position:static;display:inline-block;vertical-align:1px" width="12" height="7" viewBox="0 0 12 7"><path d="M0.5 1.5 H9.3 M0.5 5.5 H9.3 M8.3 0.3 L11.3 3.5 L8.3 6.7" fill="none" stroke="#000" stroke-width="1.0"/></svg> <span style="color:#1ea01e">VYHOVUJE</span> 84,1 %</div>
<div class="t" style="right:637px;top:928px;">Posouzení betonu pod deskou</div>
<div class="t" style="left:1349px;top:928px;">σ = 13,89 MPa ≤ f<sub>cd</sub> = 16,67 MPa <svg style="position:static;display:inline-block;vertical-align:1px" width="12" height="7" viewBox="0 0 12 7"><path d="M0.5 1.5 H9.3 M0.5 5.5 H9.3 M8.3 0.3 L11.3 3.5 L8.3 6.7" fill="none" stroke="#000" stroke-width="1.0"/></svg> <span style="color:#1ea01e">VYHOVUJE</span> 83,3 %</div>
<div class="t" style="left:1263px;top:876px;">287,5 mm<sup>2</sup> (3× třmínek) umístit do středních třech čtvrtin oblasti mezi sloupem a úložnou deskou</div>
<div style="left:610px;top:81px;width:663px;height:868px;background:#f0f0f0;border:1px solid #1a6dbd;border-radius:7px;overflow:hidden"></div>
<div style="left:610px;top:81px;width:663px;height:30px;background:#0063b1;border-radius:7px 7px 0 0"></div>
<div class="t" style="left:620px;top:88px;color:#fff">Krytí výztuže</div>
<svg style="left:1251px;top:91px" width="12" height="12"><path d="M1 1 L11 11 M11 1 L1 11" stroke="#fff" stroke-width="1.8"/></svg>
<div style="left:618px;top:126px;width:11px;height:1px;background:#ababab"></div>
<div class="t" style="left:632px;top:119px;">Prostředí</div>
<div style="left:685px;top:126px;width:580px;height:1px;background:#ababab"></div>
<div class="t" style="left:629px;top:147px;">Prostředí:</div>
<div class="t" style="left:814px;top:147px;">X0</div>
<div style="left:1000px;top:142px;width:88px;height:22px;background:#e1e1e1;border:1px solid #0078d7"></div>
<div style="left:1002px;top:144px;width:84px;height:18px;border:1px dotted #000"></div>
<svg style="left:1016px;top:147px" width="13" height="12" viewBox="0 0 13 12"><path d="M9.5 0 H12.5 V8.5 H5 V11.5 L0 7 L5 2.5 V5.5 H9.5 Z" fill="#6b2a8e"/></svg>
<div class="t" style="left:1033px;top:145px;"><u>U</u>pravit</div>
<div class="t" style="left:629px;top:173px;">Indikativní pevnostní třída</div>
<div class="t" style="left:814px;top:173px;">C8/10 <svg style="position:static;display:inline-block;vertical-align:0px" width="10" height="8" viewBox="0 0 10 8"><path d="M0.5 2.5 H7.5 M0.5 5.5 H7.5 M6 0.8 L9.2 4 L6 7.2" fill="none" stroke="#000" stroke-width="0.9"/></svg> třída betonu vyhovuje ( EN 1992-1-1 )</div>
<div class="t" style="left:814px;top:195px;">C12/15 <svg style="position:static;display:inline-block;vertical-align:0px" width="10" height="8" viewBox="0 0 10 8"><path d="M0.5 2.5 H7.5 M0.5 5.5 H7.5 M6 0.8 L9.2 4 L6 7.2" fill="none" stroke="#000" stroke-width="0.9"/></svg> třída betonu vyhovuje ( ČSN EN 206+A2;ČSN P 73 2404 )</div>
<div style="left:618px;top:232px;width:11px;height:1px;background:#ababab"></div>
<div class="t" style="left:632px;top:225px;">Třída konstrukce</div>
<div style="left:725px;top:232px;width:540px;height:1px;background:#ababab"></div>
<div class="t" style="left:629px;top:249px;">Třída :</div>
<div style="left:1000px;top:248px;width:228px;height:20px;background:#fff;border:1px solid #a9a9a9"></div>
<div class="t" style="left:1003px;top:249.5px;">S4</div>
<svg style="left:1214px;top:256px" width="9" height="5"><path d="M0 0 H9 L4.5 4.5 Z" fill="#000"/></svg>
<div class="t" style="left:629px;top:279px;">Budovy bytové, občanské a další běžné stavby, budovy pro výrobu a služby, pro těžbu paliv a rud, vodojemy a</div>
<div class="t" style="left:629px;top:294px;">zásobníky, vodní hospodářství</div>
<div style="left:629px;top:328px;width:14px;height:14px;background:#fff;border:1px solid #a3a3a3"></div>
<div class="t" style="left:650px;top:327px;">Návrhová životnost 80 let</div>
<div style="left:629px;top:351px;width:14px;height:14px;background:#fff;border:1px solid #a3a3a3"></div>
<div class="t" style="left:650px;top:350px;">Desková konstrukce</div>
<div style="left:1001px;top:328px;width:14px;height:14px;background:#fff;border:1px solid #a3a3a3"></div>
<div class="t" style="left:1022px;top:327px;">Návrhová životnost 100 let</div>
<div style="left:1001px;top:351px;width:14px;height:14px;background:#fff;border:1px solid #a3a3a3"></div>
<div class="t" style="left:1022px;top:350px;">Speciální kontrola kvality</div>
<div class="t" style="left:629px;top:395px;">Výsledná třída konstrukce:</div>
<div class="t" style="left:1000px;top:395px;font-weight:bold">S3</div>
<div style="left:618px;top:428px;width:11px;height:1px;background:#ababab"></div>
<div class="t" style="left:632px;top:421px;">Ostaní vlivy</div>
<div style="left:698px;top:428px;width:567px;height:1px;background:#ababab"></div>
<div class="t" style="left:629px;top:445px;">Třída obrusu:</div>
<div style="left:1000px;top:444px;width:228px;height:20px;background:#fff;border:1px solid #a9a9a9"></div>
<div class="t" style="left:1003px;top:445.5px;">X0 - Bez obrusu</div>
<svg style="left:1214px;top:452px" width="9" height="5"><path d="M0 0 H9 L4.5 4.5 Z" fill="#000"/></svg>
<div style="left:629px;top:518px;width:14px;height:14px;background:#fff;border:1px solid #a3a3a3"></div>
<div class="t" style="left:650px;top:517px;">Jmenovitý průměr kameniva větší než 32mm</div>
<div style="left:629px;top:546px;width:14px;height:14px;background:#fff;border:1px solid #a3a3a3"></div>
<div class="t" style="left:650px;top:545px;">Nerovný povrch</div>
<div style="left:1070px;top:541px;width:70px;height:20px;background:#f0f0f0;border:1px solid #cccccc"></div>
<div class="t" style="right:786px;top:543px;">0,0</div>
<div class="t" style="left:1147px;top:543px;">[mm]</div>
<div style="left:629px;top:576px;width:14px;height:14px;background:#fff;border:1px solid #a3a3a3"></div>
<div class="t" style="left:650px;top:575px;">Přídavná bezp. složka krytí</div>
<div class="t" style="right:856px;top:575px;">Δc<sub>dur,γ</sub></div>
<div style="left:1070px;top:571px;width:70px;height:20px;background:#f0f0f0;border:1px solid #cccccc"></div>
<div class="t" style="right:786px;top:573px;">0,0</div>
<div class="t" style="left:1147px;top:573px;">[mm]</div>
<div style="left:629px;top:606px;width:14px;height:14px;background:#fff;border:1px solid #a3a3a3"></div>
<div class="t" style="left:650px;top:605px;">Korozivzdorná výztuž</div>
<div class="t" style="right:856px;top:605px;">Δc<sub>dur,st</sub></div>
<div style="left:1070px;top:601px;width:70px;height:20px;background:#f0f0f0;border:1px solid #cccccc"></div>
<div class="t" style="right:786px;top:603px;">0,0</div>
<div class="t" style="left:1147px;top:603px;">[mm]</div>
<div style="left:629px;top:636px;width:14px;height:14px;background:#fff;border:1px solid #a3a3a3"></div>
<div class="t" style="left:650px;top:635px;">Přídavná ochrana výztuže</div>
<div class="t" style="right:856px;top:635px;">Δc<sub>dur,add</sub></div>
<div style="left:1070px;top:631px;width:70px;height:20px;background:#f0f0f0;border:1px solid #cccccc"></div>
<div class="t" style="right:786px;top:633px;">0,0</div>
<div class="t" style="left:1147px;top:633px;">[mm]</div>
<div style="left:629px;top:666px;width:14px;height:14px;background:#fff;border:1px solid #a3a3a3"></div>
<div class="t" style="left:650px;top:665px;">Přídavek pro návrh. odch.</div>
<div class="t" style="right:856px;top:665px;">Δc<sub>dev</sub></div>
<div style="left:1070px;top:661px;width:70px;height:20px;background:#f0f0f0;border:1px solid #cccccc"></div>
<div class="t" style="right:786px;top:663px;">10,0</div>
<div class="t" style="left:1147px;top:663px;">[mm]</div>
<div style="left:629px;top:692px;width:14px;height:14px;background:#fff;border:1px solid #a3a3a3"></div>
<div class="t" style="left:650px;top:691px;">Betonáž na:</div>
<div style="left:815px;top:694px;width:14px;height:14px;border:1px solid #cfcfcf;border-radius:50%;background:#f0f0f0"></div>
<div class="t" style="left:835px;top:693px;color:#a0a0a0">upravené podloží</div>
<div style="left:1000px;top:694px;width:14px;height:14px;border:1px solid #cfcfcf;border-radius:50%;background:#f0f0f0"></div>
<div style="left:1003px;top:697px;width:8px;height:8px;background:#c2c2c2;border-radius:50%"></div>
<div class="t" style="left:1020px;top:693px;color:#a0a0a0">zeminu</div>
<div style="left:618px;top:739px;width:11px;height:1px;background:#ababab"></div>
<div class="t" style="left:632px;top:732px;">Minimální krytí</div>
<div style="left:713px;top:739px;width:552px;height:1px;background:#ababab"></div>
<div style="left:618px;top:755px;width:647px;height:155px;background:#fff;border:1px solid #a9a9a9"></div>
<div class="t" style="left:628px;top:762px;"><b>Minimální krytí podélné výztuže:</b></div>
<div class="t" style="left:628px;top:778px;">c<sub>min</sub></div>
<div class="t" style="left:662px;top:778px;">= max(c<sub>min,b</sub>; c<sub>min,dur</sub>; 10) = max(20; 10; 10) = 20 mm</div>
<div class="t" style="left:628px;top:796px;">c<sub>nom</sub></div>
<div class="t" style="left:662px;top:796px;">= c<sub>min</sub> + Δc<sub>dev</sub> = 20 + 10 = 30 mm</div>
<div class="t" style="left:628px;top:814px;"><b>Minimální krytí třmínků:</b></div>
<div class="t" style="left:628px;top:830px;">c<sub>min</sub></div>
<div class="t" style="left:662px;top:830px;">= max(c<sub>min,b</sub>; c<sub>min,dur</sub>; 10) = max(8; 10; 10) = 10 mm</div>
<div class="t" style="left:628px;top:848px;">c<sub>nom</sub></div>
<div class="t" style="left:662px;top:848px;">= c<sub>min</sub> + Δc<sub>dev</sub> = 10 + 10 = 20 mm</div>
<div class="t" style="left:628px;top:866px;"><b>Krytí podélné výztuže za třmínky:</b></div>
<div class="t" style="left:628px;top:882px;">c<sub>nom</sub></div>
<div class="t" style="left:662px;top:882px;">= max(30; 20 + 8) = max(30; 20 + 8) = max(30; 28) = 30 mm</div>
<div style="left:1082px;top:918px;width:88px;height:22px;background:#e1e1e1;border:1px solid #adadad"></div>
<svg style="left:1108px;top:923px" width="14" height="12"><path d="M1 6 L5 10 L13 1.5" fill="none" stroke="#17a317" stroke-width="2.8"/></svg>
<div class="t" style="left:1126px;top:921px;"><u>O</u>K</div>
<div style="left:1177px;top:918px;width:88px;height:22px;background:#e1e1e1;border:1px solid #adadad"></div>
<svg style="left:1193px;top:923px" width="12" height="12"><path d="M1 1 L11 11 M11 1 L1 11" stroke="#e01010" stroke-width="2.6"/></svg>
<div class="t" style="left:1211px;top:921px;"><u>S</u>torno</div>
</body></html>
